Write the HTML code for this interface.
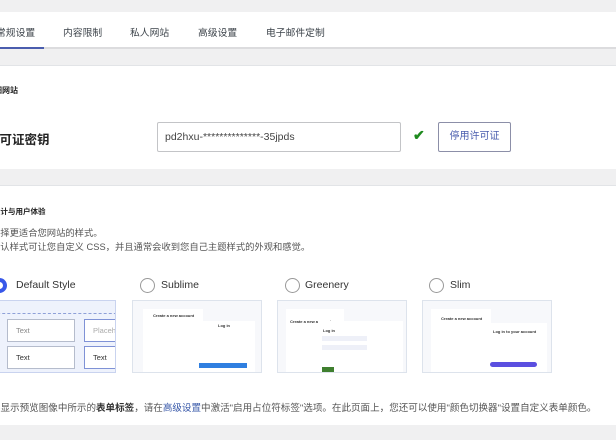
<!DOCTYPE html>
<html><head><meta charset="utf-8"><style>
*{margin:0;padding:0;box-sizing:border-box}
body{width:616px;height:440px;overflow:hidden;background:#f0f0f1;font-family:"Liberation Sans","Noto Sans CJK SC",sans-serif;color:#3c434a;position:relative}
.a{position:absolute;white-space:nowrap}
.tabs{position:absolute;left:0;top:12px;width:616px;height:37px;background:#fff;border-bottom:2px solid #dcdcde}
.tab{position:absolute;top:13px;font-size:9.8px;color:#3c434a}
.card{position:absolute;left:0;width:616px;background:#fff;border-top:1px solid #e2e4e7}
.prev{position:absolute;top:300px;width:130px;height:73px;border:1px solid #dde3ec;background:#f7f8fb;overflow:hidden}
.radio{position:absolute;top:278px;width:15px;height:15px;border:1px solid #999;border-radius:50%;background:#fff}
.lbl{position:absolute;top:279px;font-size:10.5px;color:#333}
.mini{position:absolute;background:#fff}
.t{position:absolute;font-size:4px;font-weight:bold;color:#333}
</style></head><body>
<div class="tabs">
<div class="tab" style="left:-4px">常规设置</div>
<div class="tab" style="left:63px">内容限制</div>
<div class="tab" style="left:130px">私人网站</div>
<div class="tab" style="left:198px">高级设置</div>
<div class="tab" style="left:266px">电子邮件定制</div>
<div style="position:absolute;left:0;top:35px;width:44px;height:2px;background:#4a5dae"></div>
</div>
<div class="card" style="top:65px;height:104px"></div>
<div class="a" style="left:-6px;top:85px;font-size:8px;font-weight:bold;color:#222">细网站</div>
<div class="a" style="left:-13px;top:129px;font-size:12.5px;font-weight:bold;color:#222">许可证密钥</div>
<div class="a" style="left:157px;top:122px;width:244px;height:30px;border:1px solid #c3c4c7;border-radius:2px;background:#fff;font-size:10.5px;padding:8px 0 0 7px;color:#444">pd2hxu-**************-35jpds</div>
<div class="a" style="left:413px;top:127px;font-size:14px;color:#1e8a1e;font-weight:bold">✔</div>
<div class="a" style="left:438px;top:122px;width:73px;height:30px;border:1px solid #8c8fa8;border-radius:2px;background:#fff;font-size:10px;color:#4a5dae;text-align:center;line-height:28px">停用许可证</div>
<div class="card" style="top:185px;height:240px"></div>
<div class="a" style="left:-7px;top:206px;font-size:7.5px;font-weight:bold;color:#222">设计与用户体验</div>
<div class="a" style="left:-9px;top:225px;font-size:9.3px;color:#555">选择更适合您网站的样式。</div>
<div class="a" style="left:-9px;top:239px;font-size:9.3px;color:#555">默认样式可让您自定义 CSS，并且通常会收到您自己主题样式的外观和感觉。</div>
<div class="radio" style="left:-8px;border:4px solid #3858e9"></div>
<div class="lbl" style="left:16px">Default Style</div>
<div class="radio" style="left:140px"></div><div class="lbl" style="left:161px">Sublime</div>
<div class="radio" style="left:285px"></div><div class="lbl" style="left:305px">Greenery</div>
<div class="radio" style="left:429px"></div><div class="lbl" style="left:450px">Slim</div>
<div class="prev" style="left:-14px;width:130px;background:#eef2fc;border-color:#c9d3ef">
<div style="position:absolute;left:0;top:12px;width:140px;border-top:1px dashed #8ea0d8"></div>
<div style="position:absolute;left:20px;top:18px;width:68px;height:23px;border:1px solid #b5bccc;background:#fff;font-size:7.5px;color:#888;padding:6px 8px">Text</div>
<div style="position:absolute;left:97px;top:18px;width:40px;height:23px;border:1px solid #7f92d6;background:#fff;font-size:7.5px;color:#aaa;padding:6px 8px">Placeh</div>
<div style="position:absolute;left:20px;top:45px;width:68px;height:23px;border:1px solid #b5bccc;background:#fff;font-size:7.5px;color:#333;padding:6px 8px">Text</div>
<div style="position:absolute;left:97px;top:45px;width:40px;height:23px;border:1px solid #7f92d6;background:#fff;font-size:7.5px;color:#333;padding:6px 8px">Text</div>
</div>
<div class="prev" style="left:132px">
<div class="mini" style="left:10px;top:8px;width:60px;height:70px"></div><div class="t" style="left:20px;top:12px">Create a new account</div>
<div class="mini" style="left:62px;top:20px;width:60px;height:60px"></div><div class="t" style="left:85px;top:22px">Log in</div>
<div style="position:absolute;left:66px;top:62px;width:48px;height:5px;background:#2f7fe0"></div>
</div>
<div class="prev" style="left:277px">
<div class="mini" style="left:8px;top:8px;width:58px;height:70px"></div><div class="t" style="left:12px;top:18px">Create a new account</div>
<div class="mini" style="left:40px;top:20px;width:85px;height:60px"></div><div class="t" style="left:45px;top:27px">Log in</div>
<div style="position:absolute;left:44px;top:35px;width:45px;height:5px;background:#eef0f8"></div>
<div style="position:absolute;left:44px;top:44px;width:45px;height:5px;background:#eef0f8"></div>
<div style="position:absolute;left:44px;top:66px;width:12px;height:5px;background:#3f7f2f"></div>
</div>
<div class="prev" style="left:422px">
<div class="mini" style="left:8px;top:8px;width:60px;height:70px"></div><div class="t" style="left:18px;top:15px">Create a new account</div>
<div class="mini" style="left:64px;top:22px;width:60px;height:55px"></div><div class="t" style="left:70px;top:28px">Log in to your account</div>
<div style="position:absolute;left:67px;top:61px;width:47px;height:5px;border-radius:3px;background:#5b4fe0"></div>
</div>
<div class="a" style="left:-9px;top:400px;font-size:9.55px;color:#555">要显示预览图像中所示的<b style="color:#333">表单标签</b>，请在<span style="color:#3858a9">高级设置</span>中激活"启用占位符标签"选项。在此页面上，您还可以使用"颜色切换器"设置自定义表单颜色。</div>
</body></html>
